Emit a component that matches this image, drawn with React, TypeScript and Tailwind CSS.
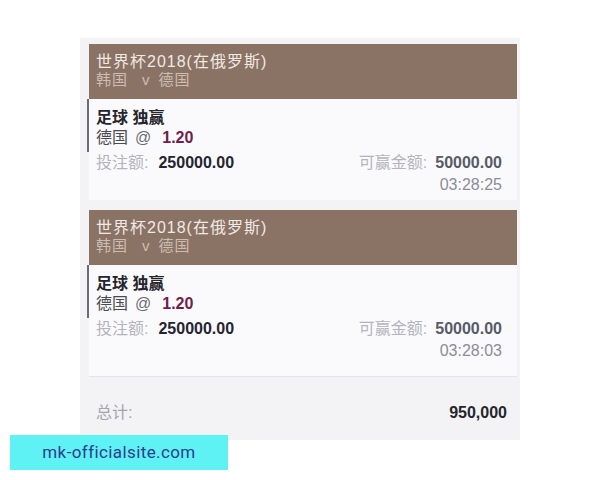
import React from 'react';

// 注单数据
interface BetSlip {
  league: string;
  home: string;
  away: string;
  market: string;
  pick: string;
  odds: string;
  stake: string;
  win: string;
  time: string;
}

const slips: BetSlip[] = [
  {
    league: '世界杯2018(在俄罗斯)',
    home: '韩国',
    away: '德国',
    market: '足球 独赢',
    pick: '德国',
    odds: '1.20',
    stake: '250000.00',
    win: '50000.00',
    time: '03:28:25',
  },
  {
    league: '世界杯2018(在俄罗斯)',
    home: '韩国',
    away: '德国',
    market: '足球 独赢',
    pick: '德国',
    odds: '1.20',
    stake: '250000.00',
    win: '50000.00',
    time: '03:28:03',
  },
];

const font = "font-['Liberation_Sans','Noto_Sans_CJK_SC',sans-serif]";

function SlipCard({ slip, last }: { slip: BetSlip; last?: boolean }) {
  return (
    <div className="flex flex-col">
      {/* 赛事标题 */}
      <div className="bg-[#8a7264] pl-[7px] pr-2 pt-[9px] pb-[11px] mr-[3px]">
        <div className="text-[16px] leading-[18px] tracking-[1px] text-[#f1e9e4]">{slip.league}</div>
        <div className="text-[15px] leading-[17px] text-[#cdbdb3] flex items-center">
          <span className="tracking-[1px]">{slip.home}</span>
          <span className="ml-[14px]">v</span>
          <span className="ml-[9px] tracking-[1px]">{slip.away}</span>
        </div>
      </div>

      {/* 注单内容 */}
      <div
        className={`bg-[#fafafc] mr-[3px] ${last ? 'pb-[15px] border-b border-[#e4e4e9]' : 'pb-[5px]'}`}
      >
        <div className="border-l-2 border-[#6b6b70] -ml-[2px] pl-[7px] pt-[9px] pb-[4px]">
          <div className="text-[16px] leading-[20px] font-bold text-[#25252b]">{slip.market}</div>
          <div className="text-[16px] leading-[20px] flex items-center">
            <span className="text-[#4a4a52]">{slip.pick}</span>
            <span className="text-[#6a6a72] ml-[7px]">@</span>
            <span className="font-bold text-[#6e1f4b] ml-[11px]">{slip.odds}</span>
          </div>
        </div>
        <div className="flex justify-between items-center pl-[7px] pr-[15px] mt-[1px] text-[16px] leading-[20px]">
          <div>
            <span className="text-[#b4b4bc]">投注额:</span>
            <span className="ml-[10px] font-bold text-[#25252d]">{slip.stake}</span>
          </div>
          <div>
            <span className="text-[#b4b4bc]">可赢金额:</span>
            <span className="ml-[8px] font-bold text-[#565b66]">{slip.win}</span>
          </div>
        </div>
        <div className="text-right pr-[15px] mt-[2px] text-[16px] leading-[20px] text-[#8c8c96]">
          {slip.time}
        </div>
      </div>
    </div>
  );
}

export default function App() {
  return (
    <div className={`relative w-[600px] h-[480px] bg-white overflow-hidden ${font}`}>
      <div className="pt-[38px] pl-[80px]">
        <div className="w-[440px] bg-[#f3f3f6] pt-[6px] pl-[9px] flex flex-col gap-[10px]">
          {slips.map((s, i) => (
            <SlipCard key={i} slip={s} last={i === slips.length - 1} />
          ))}
          {/* 总计 */}
          <div className="flex justify-between items-center pl-[7px] pr-[13px] pt-[26px] pb-[17px] -mt-[10px] text-[16px] leading-[20px]">
            <span className="text-[#a4a4ac]">总计:</span>
            <span className="font-bold text-[#25252b]">950,000</span>
          </div>
        </div>
      </div>

      {/* 水印 */}
      <div className="absolute left-[10px] top-[435px] w-[218px] h-[35px] bg-[#5ff2f5] flex items-center justify-center">
        <span className="text-[17px] tracking-[0.4px] text-[#2b3d8c] font-['Roboto','Liberation_Sans',sans-serif]">mk-officialsite.com</span>
      </div>
    </div>
  );
}
